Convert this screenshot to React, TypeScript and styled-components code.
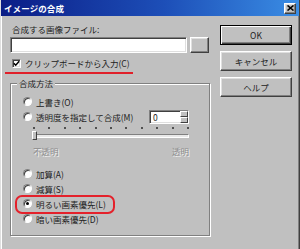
import React from 'react';
import styled, { createGlobalStyle, css } from 'styled-components';

const face = '#c0c0c0';
const shadow = '#808080';
const dark = '#404040';
const font = `"Noto Sans CJK JP", "Noto Sans", sans-serif`;

const GlobalStyle = createGlobalStyle`
  html, body {
    margin: 0;
    padding: 0;
    background: ${face};
  }
  body {
    font-family: ${font};
    font-size: 8.5px;
    color: #1c1c1c;
  }
`;

const raised = css`
  border: 1px solid;
  border-color: #ffffff ${dark} ${dark} #ffffff;
  box-shadow: inset -1px -1px 0 ${shadow}, inset 1px 1px 0 #dfdfdf;
`;

const sunken = css`
  border: 1px solid;
  border-color: ${shadow} #ffffff #ffffff ${shadow};
  box-shadow: inset 1px 1px 0 ${dark}, inset -1px -1px 0 #dfdfdf;
`;

const Window = styled.div`
  width: 300px;
  height: 249px;
  box-sizing: border-box;
  background: ${face};
  border-left: 1px solid #dfdfdf;
  border-right: 1px solid ${dark};
  box-shadow: inset -1px 0 0 ${shadow}, inset 1px 0 0 #ffffff;
  display: flex;
  flex-direction: column;
  overflow: hidden;
`;

const TitleBar = styled.div`
  height: 16px;
  flex-shrink: 0;
  display: flex;
  align-items: center;
  justify-content: space-between;
  padding: 0 3px 0 3px;
  background: linear-gradient(to right, #0b1d86 0%, #1d4fb8 55%, #3a8de4 100%);
  color: #ffffff;
  font-weight: bold;
  font-size: 8.5px;
  letter-spacing: 0.1px;
`;

const CloseButton = styled.div`
  width: 12px;
  height: 11px;
  box-sizing: border-box;
  background: ${face};
  ${raised};
  display: flex;
  align-items: center;
  justify-content: center;
`;

const Body = styled.div`
  display: flex;
  padding: 8px 0 0 9px;
  gap: 10px;
`;

const Main = styled.div`
  width: 200px;
  display: flex;
  flex-direction: column;
`;

const Label = styled.div`
  height: 10px;
  line-height: 10px;
  padding-left: 2px;
`;

const InputRow = styled.div`
  display: flex;
  gap: 3px;
  margin-top: 3px;
`;

const TextInput = styled.div`
  width: 177px;
  height: 16px;
  box-sizing: border-box;
  background: #ffffff;
  ${sunken};
`;

const BrowseButton = styled.div`
  width: 19px;
  height: 16px;
  box-sizing: border-box;
  background: ${face};
  ${raised};
`;

const CheckRow = styled.div`
  position: relative;
  display: flex;
  align-items: center;
  gap: 4px;
  height: 10px;
  margin-top: 5px;
  padding-left: 2px;

  &::after {
    content: '';
    position: absolute;
    left: -5px;
    width: 128px;
    top: 14px;
    height: 2px;
    background: #e0202a;
  }
`;

const CheckBox = styled.div`
  width: 9px;
  height: 9px;
  box-sizing: border-box;
  background: #ffffff;
  ${sunken};
  display: flex;
  align-items: center;
  justify-content: center;
`;

const GroupBox = styled.div`
  position: relative;
  margin-top: 15px;
  height: 153px;
  box-sizing: border-box;
  border: 1px solid ${shadow};
  box-shadow: inset 1px 1px 0 #ffffff, 1px 1px 0 #ffffff;
  padding: 10px 0 0 12px;
  display: flex;
  flex-direction: column;
`;

const Legend = styled.div`
  position: absolute;
  top: -6px;
  left: 6px;
  padding: 0 2px;
  background: ${face};
  line-height: 10px;
`;

const RadioRow = styled.div<{ $marked?: boolean; $gap?: number }>`
  position: relative;
  display: flex;
  align-items: center;
  gap: 4px;
  height: 15px;
  margin-top: ${(p) => p.$gap ?? 0}px;

  ${(p) =>
    p.$marked &&
    css`
      &::after {
        content: '';
        position: absolute;
        left: -8px;
        top: -1px;
        width: 96px;
        height: 15px;
        border: 2px solid #e4212b;
        border-radius: 7px;
      }
    `}
`;

const Radio = styled.div<{ $checked?: boolean }>`
  width: 9px;
  height: 9px;
  box-sizing: border-box;
  border-radius: 50%;
  background: #ffffff;
  border: 1px solid;
  border-color: ${shadow} #ffffff #ffffff ${shadow};
  box-shadow: inset 1px 1px 0 ${dark};
  display: flex;
  align-items: center;
  justify-content: center;

  &::before {
    content: '';
    width: 3px;
    height: 3px;
    border-radius: 50%;
    background: ${(p) => (p.$checked ? '#000' : 'transparent')};
  }
`;

const SpinBox = styled.div`
  margin-left: auto;
  margin-right: 20px;
  width: 40px;
  height: 14px;
  box-sizing: border-box;
  background: #ffffff;
  ${sunken};
  display: flex;
  align-items: stretch;
`;

const SpinValue = styled.div`
  flex: 1;
  padding-left: 3px;
  line-height: 12px;
`;

const SpinArrows = styled.div`
  width: 8px;
  display: flex;
  flex-direction: column;
`;

const SpinArrow = styled.div`
  flex: 1;
  background: ${face};
  ${raised};
  border-width: 1px;
  box-shadow: none;
`;

const Slider = styled.div`
  margin: 3px 0 0 10px;
  width: 156px;
  display: flex;
  flex-direction: column;
`;

const Ticks = styled.div`
  display: flex;
  justify-content: space-between;
  height: 3px;
`;

const Tick = styled.div`
  width: 2px;
  height: 2px;
  background: #505050;
`;

const Track = styled.div`
  position: relative;
  margin-top: 4px;
  height: 4px;
  box-sizing: border-box;
  border: 1px solid;
  border-color: ${shadow} #ffffff #ffffff ${shadow};
  background: #e8e8e8;
`;

const Thumb = styled.div`
  position: absolute;
  left: -2px;
  top: -4px;
  width: 5px;
  height: 9px;
  box-sizing: border-box;
  background: ${face};
  border: 1px solid;
  border-color: #ffffff ${dark} ${dark} #ffffff;
`;

const SliderLabels = styled.div`
  display: flex;
  justify-content: space-between;
  margin-top: 8px;
  line-height: 10px;
  color: #8c8c8c;
  text-shadow: 1px 1px 0 #f4f4f4;
`;

const ButtonColumn = styled.div`
  display: flex;
  flex-direction: column;
  gap: 6px;
  padding-top: 1px;
`;

const Button = styled.div<{ $default?: boolean }>`
  width: 72px;
  height: 20px;
  box-sizing: border-box;
  background: ${face};
  display: flex;
  align-items: center;
  justify-content: center;
  ${raised};
  ${(p) =>
    p.$default &&
    css`
      border: 1px solid #000;
      box-shadow: inset 1px 1px 0 #ffffff, inset -1px -1px 0 ${dark},
        inset -2px -2px 0 ${shadow};
    `}
`;

const upperRadios = ['上書き(O)'];
const lowerRadios = ['加算(A)', '減算(S)', '明るい画素優先(L)', '暗い画素優先(D)'];

export default function App() {
  return (
    <>
      <GlobalStyle />
      <Window>
        <TitleBar>
          <span>イメージの合成</span>
          <CloseButton>
            <svg width="7" height="6" viewBox="0 0 7 6">
              <path d="M0.5 0.5 L6.5 5.5 M6.5 0.5 L0.5 5.5" stroke="#000" strokeWidth="1.6" />
            </svg>
          </CloseButton>
        </TitleBar>
        <Body>
          <Main>
            <Label>合成する画像ファイル:</Label>
            <InputRow>
              <TextInput />
              <BrowseButton />
            </InputRow>
            <CheckRow>
              <CheckBox>
                <svg width="7" height="7" viewBox="0 0 7 7">
                  <path d="M0.8 3.2 L2.7 5.2 L6.2 1.2" stroke="#000" strokeWidth="1.5" fill="none" />
                </svg>
              </CheckBox>
              <span>クリップボードから入力(C)</span>
            </CheckRow>
            <GroupBox>
              <Legend>合成方法</Legend>
              {upperRadios.map((t) => (
                <RadioRow key={t}>
                  <Radio />
                  <span>{t}</span>
                </RadioRow>
              ))}
              <RadioRow>
                <Radio />
                <span>透明度を指定して合成(M)</span>
                <SpinBox>
                  <SpinValue>0</SpinValue>
                  <SpinArrows>
                    <SpinArrow />
                    <SpinArrow />
                  </SpinArrows>
                </SpinBox>
              </RadioRow>
              <Slider>
                <Ticks>
                  {Array.from({ length: 11 }).map((_, i) => (
                    <Tick key={i} />
                  ))}
                </Ticks>
                <Track>
                  <Thumb />
                </Track>
                <SliderLabels>
                  <span>不透明</span>
                  <span>透明</span>
                </SliderLabels>
              </Slider>
              {lowerRadios.map((t, i) => (
                <RadioRow key={t} $gap={i === 0 ? 10 : 0} $marked={i === 2}>
                  <Radio $checked={i === 2} />
                  <span>{t}</span>
                </RadioRow>
              ))}
            </GroupBox>
          </Main>
          <ButtonColumn>
            <Button $default>OK</Button>
            <Button>キャンセル</Button>
            <Button>ヘルプ</Button>
          </ButtonColumn>
        </Body>
      </Window>
    </>
  );
}
